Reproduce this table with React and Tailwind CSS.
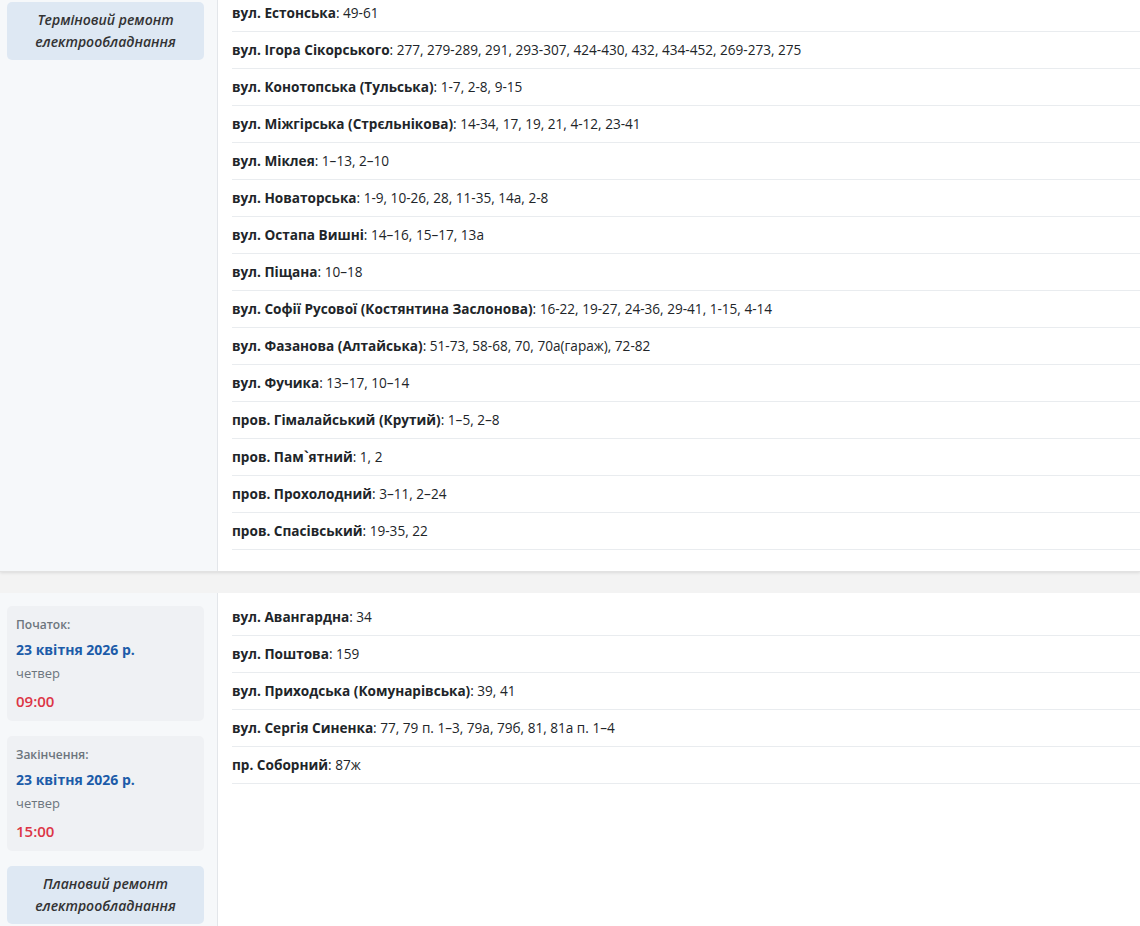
const first = [
  ["вул. Естонська", "49-61"],
  ["вул. Ігора Сікорського", "277, 279-289, 291, 293-307, 424-430, 432, 434-452, 269-273, 275"],
  ["вул. Конотопська (Тульська)", "1-7, 2-8, 9-15"],
  ["вул. Міжгірська (Стрєльнікова)", "14-34, 17, 19, 21, 4-12, 23-41"],
  ["вул. Міклея", "1–13, 2–10"],
  ["вул. Новаторська", "1-9, 10-26, 28, 11-35, 14а, 2-8"],
  ["вул. Остапа Вишні", "14–16, 15–17, 13а"],
  ["вул. Піщана", "10–18"],
  ["вул. Софії Русової (Костянтина Заслонова)", "16-22, 19-27, 24-36, 29-41, 1-15, 4-14"],
  ["вул. Фазанова (Алтайська)", "51-73, 58-68, 70, 70а(гараж), 72-82"],
  ["вул. Фучика", "13–17, 10–14"],
  ["пров. Гімалайський (Крутий)", "1–5, 2–8"],
  ["пров. Пам`ятний", "1, 2"],
  ["пров. Прохолодний", "3–11, 2–24"],
  ["пров. Спасівський", "19-35, 22"],
];

const second = [
  ["вул. Авангардна", "34"],
  ["вул. Поштова", "159"],
  ["вул. Приходська (Комунарівська)", "39, 41"],
  ["вул. Сергія Синенка", "77, 79 п. 1–3, 79а, 79б, 81, 81а п. 1–4"],
  ["пр. Соборний", "87ж"],
];

function TypeBox({ children }) {
  return (
    <div className="rounded-[5px] bg-[#dee8f3] px-2 py-[7px] text-center text-sm font-semibold italic leading-[22px] text-[#333]">
      {children}
    </div>
  );
}

function DateBox({ label, date, day, time }) {
  return (
    <div className="rounded-[5px] bg-[#eff1f4] px-[9px] pt-[9px] pb-[9px]">
      <div className="text-xs font-semibold leading-[20px] text-[#6c757d]">{label}</div>
      <div className="mt-[4px] text-sm font-bold leading-[22px] text-[#1c5ca9]">{date}</div>
      <div className="text-[13px] leading-[24px] text-[#6c757d]">{day}</div>
      <div className="mt-[5px] text-[15px] font-semibold leading-[22px] text-[#dc3545]">{time}</div>
    </div>
  );
}

function Streets({ rows, last }) {
  return (
    <ul className={`flex-1 pl-[14px] pt-[6px] ${last ? "pb-0" : "pb-[21px]"}`}>
      {rows.map(([street, houses]) => (
        <li key={street} className="border-b border-[#e9ecef] py-2 text-[13.6px] leading-5 whitespace-nowrap text-[#212529]">
          <span className="font-bold">{street}</span>: {houses}
        </li>
      ))}
    </ul>
  );
}

export default function App() {
  return (
    <div className="h-[926px] overflow-hidden bg-[#f3f3f3] font-['Open_Sans',sans-serif]">
      <div className="-mt-[11px] flex border-b border-[#e2e2e2] bg-white shadow-[0_1px_3px_rgba(0,0,0,0.1)]">
        <div className="w-[218px] shrink-0 border-r border-[#e3e6ea] bg-[#f6f8fa] pl-[7px] pr-[13px] pt-[13px]">
          <TypeBox>
            Терміновий ремонт
            <br />
            електрообладнання
          </TypeBox>
        </div>
        <Streets rows={first} />
      </div>

      <div className="mt-[21px] flex min-h-[340px] bg-white">
        <div className="flex w-[218px] shrink-0 flex-col gap-[15px] border-r border-[#e3e6ea] bg-[#f6f8fa] pl-[7px] pr-[13px] pt-[13px] pb-[13px]">
          <DateBox label="Початок:" date="23 квітня 2026 р." day="четвер" time="09:00" />
          <DateBox label="Закінчення:" date="23 квітня 2026 р." day="четвер" time="15:00" />
          <TypeBox>
            Плановий ремонт
            <br />
            електрообладнання
          </TypeBox>
        </div>
        <Streets rows={second} last />
      </div>
    </div>
  );
}
